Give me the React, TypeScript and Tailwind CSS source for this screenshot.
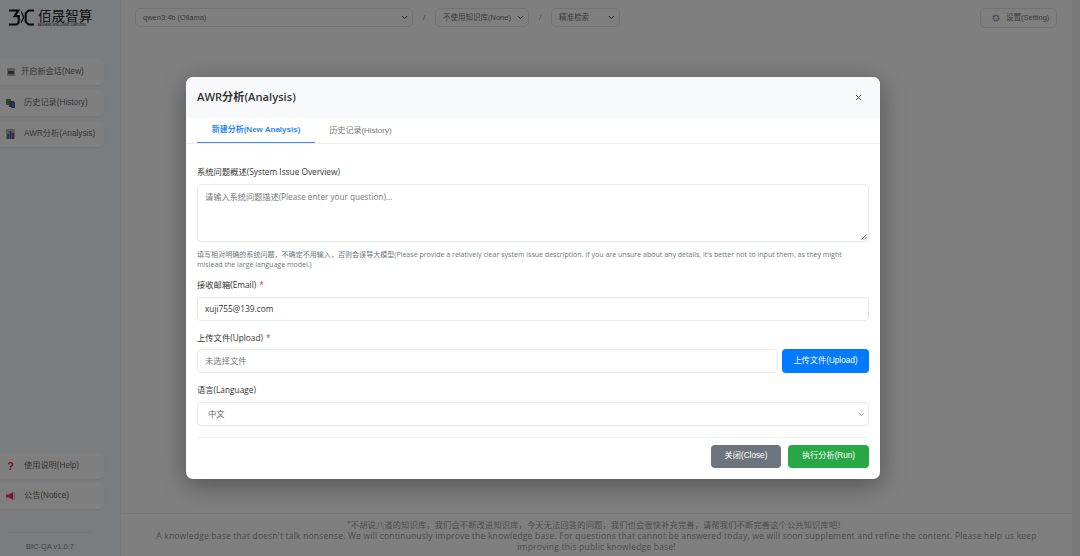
import React from "react";
import { ChevronDown, X } from "lucide-react";

const FONT = "font-['Open_Sans','Noto_Sans_CJK_SC',sans-serif]";
const ARIAL = "font-['Liberation_Sans','Noto_Sans_CJK_SC',sans-serif]";

function Logo() {
  return (
    <div className="flex h-[20px] w-[86px] items-start gap-[3px]">
      <svg width="27" height="17" viewBox="0 0 29 18" fill="none" stroke="#111" strokeWidth="2.2" className="mt-[1px] shrink-0">
        <path d="M1 1.5h10l-4 6h4.5v7l-2 2H1" />
        <path d="M14 2.5l3 6-3 6" strokeWidth="1.4" />
        <path d="M28 1.5h-6l-3 3v9l3 3h6" />
      </svg>
      <div className="flex flex-col">
        <span className="whitespace-nowrap text-[13.5px] leading-[14px] tracking-[0.1px] text-[#222] font-['Noto_Sans_CJK_SC',sans-serif]">佰晟智算</span>
        <span className="mt-[2px] whitespace-nowrap text-[2.6px] leading-[3px] font-bold text-[#555]">BAISHENG INTELLIGENT COMPUTING</span>
      </div>
    </div>
  );
}

function NewIcon() {
  return (
    <svg width="8" height="8" viewBox="0 0 8 8">
      <rect width="8" height="8" fill="#b5b5b5" />
      <rect x="1" y="3" width="6" height="3" fill="#555" />
    </svg>
  );
}

function HistoryIcon() {
  return (
    <svg width="9" height="9" viewBox="0 0 9 9">
      <rect width="5" height="6" fill="#3a9a4a" />
      <rect x="3" y="2" width="5" height="6" fill="#b03a5a" />
      <rect x="5" y="3" width="4" height="6" fill="#2f6fc0" />
    </svg>
  );
}

function ChartIcon() {
  return (
    <svg width="9" height="10" viewBox="0 0 9 10">
      <rect width="9" height="10" fill="#b8b8b8" />
      <rect x="1" y="5" width="2" height="5" fill="#2f8f5f" />
      <rect x="3.5" y="2" width="2" height="8" fill="#2f6fc0" />
      <rect x="6" y="4" width="2" height="6" fill="#c03a5a" />
    </svg>
  );
}

function QuestionIcon() {
  return <span className="text-[11px] leading-none font-bold text-[#f02868] font-['Liberation_Sans',sans-serif]">?</span>;
}

function NoticeIcon() {
  return (
    <svg width="9" height="8" viewBox="0 0 9 8">
      <rect x="0" y="2.5" width="3" height="3" fill="#f02868" />
      <path d="M3 2.5L7 0v8L3 5.5z" fill="#f02868" />
      <rect x="7.5" y="0" width="1.5" height="8" fill="#c0c0c0" />
    </svg>
  );
}

function GearIcon() {
  return (
    <svg width="8" height="8" viewBox="0 0 8 8">
      <circle cx="4" cy="4" r="2.6" fill="none" stroke="#8a80b0" strokeWidth="1.8" strokeDasharray="1.6 0.6" />
    </svg>
  );
}

function NavButton({ icon, label, gap }: { icon: React.ReactNode; label: string; gap: string }) {
  return (
    <div className={`flex h-[26px] w-[104px] items-center rounded-r-[5px] bg-white pl-[6px] shadow-[0_1px_2px_rgba(0,0,0,0.05)] text-[8.2px] text-[#6b6b6b] ${gap}`}>
      <span className="flex w-[9px] shrink-0 justify-center">{icon}</span>
      <span className="whitespace-nowrap">{label}</span>
    </div>
  );
}

function TopSelect({ label, width }: { label: string; width: string }) {
  return (
    <div className={`flex h-[19px] items-center justify-between rounded-[5px] border border-[#e6e6e6] pl-[7px] pr-[3px] text-[7.5px] text-[#777] ${width}`}>
      <span className="whitespace-nowrap">{label}</span>
      <ChevronDown size={9} strokeWidth={2.5} className="text-[#333]" />
    </div>
  );
}

function FieldLabel({ text, required }: { text: string; required?: boolean }) {
  return (
    <div className="text-[8.3px] leading-[12px] text-[#333]">
      {text}
      {required && <span className="ml-[3px] text-[#dc3545]">*</span>}
    </div>
  );
}

function Modal() {
  return (
    <div className={`flex h-[402px] w-[694px] flex-col overflow-hidden rounded-[7px] bg-white shadow-[0_6px_24px_rgba(0,0,0,0.35)] ${FONT}`}>
      {/* header */}
      <div className="flex h-[41px] shrink-0 items-center justify-between bg-[#f8f9fa] pl-[11px] pr-[17px]">
        <h2 className="text-[11.2px] font-semibold text-[#333]">AWR分析(Analysis)</h2>
        <X size={9} strokeWidth={2.5} className="text-[#444]" />
      </div>
      {/* tabs */}
      <div className="flex h-[26px] shrink-0 border-b border-[#eeeeee] pl-[11px] text-[8px]">
        <div className={`flex w-[118px] items-center justify-center border-b-[1px] border-[#3d8bfd] font-bold text-[#2f87f5] ${ARIAL}`}>新建分析(New Analysis)</div>
        <div className={`flex w-[91px] items-center justify-center text-[#777] ${ARIAL}`}>历史记录(History)</div>
      </div>
      {/* body */}
      <div className="flex flex-1 flex-col px-[11px] pt-[22px]">
        <FieldLabel text="系统问题概述(System Issue Overview)" />
        <div className="relative mt-[6px] h-[58px] shrink-0 rounded-[4px] border border-[#e8e8e8] px-[7px] py-[5px] text-[8.2px] leading-[13px] text-[#777]">
          请输入系统问题描述(Please enter your question)...
          <svg width="6" height="6" viewBox="0 0 6 6" className="absolute right-[1px] bottom-[1px]" stroke="#666" strokeWidth="0.8">
            <path d="M0.5 5.5L5.5 0.5M3 5.5L5.5 3" />
          </svg>
        </div>
        <p className="mt-[7px] pr-[10px] text-[7.05px] leading-[10px] text-[#6c757d]">
          填写相对明确的系统问题，不确定不用输入，否则会误导大模型(Please provide a relatively clear system issue description. If you are unsure about any details, it's better not to input them, as they might mislead the large language model.)
        </p>
        <div className="mt-[10px]">
          <FieldLabel text="接收邮箱(Email)" required />
        </div>
        <div className="mt-[6px] flex h-[24px] items-center rounded-[4px] border border-[#e8e8e8] px-[7px] text-[8.3px] text-[#333]">xuji755@139.com</div>
        <div className="mt-[11px]">
          <FieldLabel text="上传文件(Upload)" required />
        </div>
        <div className="mt-[5px] flex h-[24px] gap-[4px]">
          <div className="flex flex-1 items-center rounded-[4px] border border-[#e8e8e8] px-[7px] text-[8.3px] text-[#777]">未选择文件</div>
          <div className={`flex w-[87px] items-center justify-center rounded-[4px] bg-[#007bff] text-[8.2px] text-white ${ARIAL}`}>上传文件(Upload)</div>
        </div>
        <div className="mt-[11px]">
          <FieldLabel text="语言(Language)" />
        </div>
        <div className="mt-[6px] flex h-[24px] items-center justify-between rounded-[4px] border border-[#e8e8e8] pl-[10px] pr-[3px] text-[8.3px] text-[#666]">
          中文
          <ChevronDown size={7} strokeWidth={2.5} className="text-[#666]" />
        </div>
        <div className="mt-[11px] flex h-[42px] items-start justify-end gap-[7px] border-t border-[#eeeeee] pt-[7px]">
          <div className={`flex h-[23px] w-[70px] items-center justify-center rounded-[4px] bg-[#6c757d] text-[8.2px] text-white ${ARIAL}`}>关闭(Close)</div>
          <div className={`flex h-[23px] w-[81px] items-center justify-center rounded-[4px] bg-[#28a745] text-[8.2px] text-white ${ARIAL}`}>执行分析(Run)</div>
        </div>
      </div>
    </div>
  );
}

export default function App() {
  return (
    <div className={`relative flex h-[556px] w-[1080px] overflow-hidden bg-white ${ARIAL}`}>
      {/* sidebar */}
      <aside className="flex w-[121px] shrink-0 flex-col border-r border-[#eeeeee] bg-[#f6f8fb]">
        <div className="pl-[8px] pt-[8px]">
          <Logo />
        </div>
        <div className="mt-[31px] flex flex-col gap-[5px]">
          <NavButton icon={<NewIcon />} label="开启新会话(New)" gap="gap-[6px]" />
          <NavButton icon={<HistoryIcon />} label="历史记录(History)" gap="gap-[9px]" />
          <NavButton icon={<ChartIcon />} label="AWR分析(Analysis)" gap="gap-[9px]" />
        </div>
        <div className="mt-auto flex flex-col gap-[4px]">
          <NavButton icon={<QuestionIcon />} label="使用说明(Help)" gap="gap-[9px]" />
          <NavButton icon={<NoticeIcon />} label="公告(Notice)" gap="gap-[9px]" />
        </div>
        <div className="ml-[8px] mr-[28px] mt-[23px] flex h-[24px] items-start justify-center border-t border-[#efefef] pt-[8px] text-[7.5px] text-[#888]">BIC-QA v1.0.7</div>
      </aside>

      {/* main */}
      <main className="flex min-w-0 flex-1 flex-col">
        <div className="flex items-start justify-between pl-[14px] pr-[15px] pt-[8px]">
          <div className="flex items-center text-[8px] text-[#999]">
            <TopSelect label="qwen3:4b (Ollama)" width="w-[278px]" />
            <span className="w-[22px] text-center">/</span>
            <TopSelect label="不使用知识库(None)" width="w-[94px]" />
            <span className="w-[22px] text-center">/</span>
            <TopSelect label="精准检索" width="w-[69px]" />
          </div>
          <div className="flex h-[20px] w-[77px] items-center gap-[6px] rounded-[5px] border border-[#e6e6e6] pl-[11px] text-[7.5px] text-[#777]">
            <GearIcon />
            设置(Setting)
          </div>
        </div>
        <div className="flex-1" />
        <footer className={`flex h-[43px] flex-col items-center justify-center border-t border-[#eeeeee] px-[30px] text-center text-[8.5px] leading-[11px] tracking-[0.2px] text-[#999] ${FONT}`}>
          <p className="text-[8.2px]">"不胡说八道的知识库，我们会不断改进知识库，今天无法回答的问题，我们也会很快补充完善，请帮我们不断完善这个公共知识库吧！</p>
          <p>A knowledge base that doesn't talk nonsense. We will continuously improve the knowledge base. For questions that cannot be answered today, we will soon supplement and refine the content. Please help us keep improving this public knowledge base!</p>
        </footer>
      </main>
      <div className="w-[8px] shrink-0 bg-[#f1f1f1]" />

      {/* modal backdrop */}
      <div className="absolute inset-0 bg-black/50 pl-[186px] pt-[77px]">
        <Modal />
      </div>
    </div>
  );
}
